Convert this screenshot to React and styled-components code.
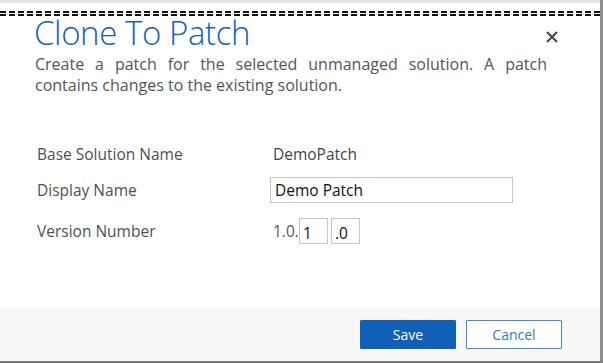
import React from 'react'
import styled, { createGlobalStyle } from 'styled-components'

const Global = createGlobalStyle`
html, body {
  margin: 0;
  padding: 0;
  background: #ffffff;
}
body {
  font-family: "Open Sans", "Noto Sans", sans-serif;
}
`

const Frame = styled.div`
width: 603px;
height: 363px;
box-sizing: border-box;
display: flex;
flex-direction: column;
border-right: 3px solid #8c8c8c;
border-bottom: 2px solid #7a7a7a;
overflow: hidden;
background: #ffffff;
`

const TopStrip = styled.div`
height: 3px;
background: #e4e4e4;
flex-shrink: 0;
`

const DashBlock = styled.div`
display: flex;
flex-direction: column;
gap: 1px;
margin-top: 8px;
flex-shrink: 0;
`

const Dashes = styled.div`
height: 2px;
background: repeating-linear-gradient(90deg, #111 0 6px, transparent 6px 9px);
`

const Body = styled.div`
flex: 1;
padding: 0 40px 0 35px;
display: flex;
flex-direction: column;
`

const Header = styled.div`
display: flex;
justify-content: space-between;
align-items: flex-start;
margin-top: -2px;
`

const Title = styled.h1`
margin: 0 0 0 -1px;
font-size: 33px;
font-weight: 300;
color: #1362bb;
line-height: 38px;
letter-spacing: -0.4px;
`

const Close = styled.button`
border: none;
background: none;
padding: 0;
margin: 16px 1px 0 0;
width: 14px;
height: 14px;
display: flex;
align-items: center;
justify-content: center;
cursor: pointer;
`

const Desc = styled.p`
margin: 2px 0 0;
width: 512px;
font-size: 16px;
line-height: 21px;
color: #555;
text-align: justify;
`

const Fields = styled.div`
margin-top: 45px;
display: flex;
flex-direction: column;
padding-left: 2px;
`

const Row = styled.div`
display: flex;
align-items: center;
height: 26px;
margin-top: ${({ top }) => top || 0}px;
`

const Label = styled.div`
width: 236px;
flex-shrink: 0;
font-size: 15.5px;
color: #505050;
`

const Value = styled.div`
font-size: 15.5px;
color: #444;
`

const TextBox = styled.div`
width: 243px;
height: 26px;
box-sizing: border-box;
border: 1px solid #c6c6c6;
margin-left: -3px;
padding-left: 4px;
font-size: 15.5px;
line-height: 24px;
color: #111;
`

const VersionRow = styled.div`
display: flex;
align-items: center;
font-size: 15.5px;
color: #555;
`

const Part = styled.div`
width: ${({ w }) => w}px;
height: 26px;
box-sizing: border-box;
border: 1px solid #c6c6c6;
margin-left: ${({ gap }) => gap}px;
padding-left: 3px;
line-height: 28px;
color: #111;
`

const Footer = styled.div`
height: 53px;
flex-shrink: 0;
background: #f8f8f8;
display: flex;
justify-content: flex-end;
align-items: center;
gap: 10px;
padding-right: 38px;
`

const Button = styled.button`
width: 96px;
height: 29px;
box-sizing: border-box;
font-family: "Open Sans", sans-serif;
font-size: 14px;
border-radius: 1px;
border: 1px solid ${({ primary }) => (primary ? '#1160b7' : '#3e8ad6')};
background: ${({ primary }) => (primary ? '#1160b7' : '#ffffff')};
color: ${({ primary }) => (primary ? '#ffffff' : '#2c7bd0')};
font-weight: ${({ primary }) => (primary ? 500 : 400)};
cursor: pointer;
`

export default function App() {
  return (
    <>
      <Global />
      <Frame>
        <TopStrip />
        <DashBlock>
          <Dashes />
          <Dashes />
        </DashBlock>
        <Body>
          <Header>
            <Title>Clone To Patch</Title>
            <Close aria-label="Close">
              <svg width="12" height="12" viewBox="0 0 12 12">
                <path d="M1 1 L11 11 M11 1 L1 11" stroke="#444" strokeWidth="2" />
              </svg>
            </Close>
          </Header>
          <Desc>
            Create a patch for the selected unmanaged solution. A patch contains changes to the existing solution.
          </Desc>
          <Fields>
            <Row>
              <Label>Base Solution Name</Label>
              <Value>DemoPatch</Value>
            </Row>
            <Row top={10}>
              <Label>Display Name</Label>
              <TextBox>Demo Patch</TextBox>
            </Row>
            <Row top={15}>
              <Label>Version Number</Label>
              <VersionRow>
                1.0.
                <Part w={29} gap={0}>1</Part>
                <Part w={29} gap={3}>.0</Part>
              </VersionRow>
            </Row>
          </Fields>
        </Body>
        <Footer>
          <Button primary>Save</Button>
          <Button>Cancel</Button>
        </Footer>
      </Frame>
    </>
  )
}
